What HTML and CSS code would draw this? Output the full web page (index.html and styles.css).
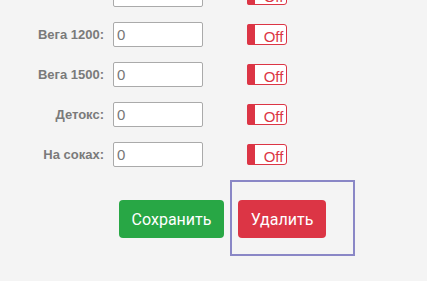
FILE: index.html
```html
<!DOCTYPE html>
<html lang="ru">
<head>
    <meta charset="UTF-8">
    <title>Программы</title>
    <link rel="stylesheet" href="styles.css">
</head>
<body>
    <div class="form">
        <div class="row">
            <label class="row-label">Вега 900:</label>
            <input class="row-input" type="text" value="0">
            <span class="toggle"><span class="toggle-knob"></span><span class="toggle-text">Off</span></span>
        </div>
        <div class="row">
            <label class="row-label">Вега 1200:</label>
            <input class="row-input" type="text" value="0">
            <span class="toggle"><span class="toggle-knob"></span><span class="toggle-text">Off</span></span>
        </div>
        <div class="row">
            <label class="row-label">Вега 1500:</label>
            <input class="row-input" type="text" value="0">
            <span class="toggle"><span class="toggle-knob"></span><span class="toggle-text">Off</span></span>
        </div>
        <div class="row">
            <label class="row-label">Детокс:</label>
            <input class="row-input" type="text" value="0">
            <span class="toggle"><span class="toggle-knob"></span><span class="toggle-text">Off</span></span>
        </div>
        <div class="row">
            <label class="row-label">На соках:</label>
            <input class="row-input" type="text" value="0">
            <span class="toggle"><span class="toggle-knob"></span><span class="toggle-text">Off</span></span>
        </div>
    </div>

    <div class="actions">
        <button class="btn btn-save">Сохранить</button>
        <div class="highlight">
            <button class="btn btn-delete">Удалить</button>
        </div>
    </div>
</body>
</html>
```

FILE: styles.css
```css
body {
    margin: 0;
    background-color: #f4f4f4;
    font-family: "Liberation Sans", Arial, sans-serif;
    width: 427px;
    height: 281px;
    overflow: hidden;
}

.form {
    margin-top: -18px;
    display: flex;
    flex-direction: column;
    gap: 15px;
}

.row {
    display: flex;
    align-items: flex-start;
    height: 25px;
}

.row-label {
    width: 104px;
    text-align: right;
    font-size: 13px;
    font-weight: bold;
    color: #7a7a7a;
    line-height: 25px;
    flex-shrink: 0;
    margin-right: 9px;
}

.row-input {
    width: 90px;
    height: 25px;
    box-sizing: border-box;
    border: 1px solid #aaa;
    border-radius: 2px;
    background: #fff;
    padding: 0 3px;
    font-family: "Liberation Sans", Arial, sans-serif;
    font-size: 15px;
    color: #777;
    margin: 0;
}

.toggle {
    display: flex;
    margin-left: 44px;
    margin-top: 2px;
    width: 40px;
    height: 21px;
    box-sizing: border-box;
    border: 1px solid #dc3545;
    border-radius: 3px;
    background: #fff;
}

.toggle-knob {
    width: 8px;
    background: #dc3545;
    border-radius: 2px 0 0 2px;
    margin: -1px 0 -1px -1px;
}

.toggle-text {
    flex: 1;
    display: flex;
    align-items: flex-end;
    justify-content: center;
    padding-left: 6px;
    font-size: 15px;
    line-height: 15px;
    color: #dc3545;
}

.actions {
    display: flex;
    align-items: flex-start;
    gap: 6px;
    margin-top: 13px;
    margin-left: 119px;
}

.btn {
    font-family: Roboto, sans-serif;
    font-size: 16px;
    color: #fff;
    border: none;
    border-radius: 4px;
    height: 38px;
    padding: 0 12px;
    cursor: pointer;
    margin-top: 20px;
}

.btn-save {
    background-color: #28a745;
    width: 105px;
}

.btn-delete {
    background-color: #dc3545;
    width: 88px;
    margin: 0;
}

.highlight {
    border: 2px solid #8a87c6;
    padding: 18px 27px 16px 6px;
}
```
